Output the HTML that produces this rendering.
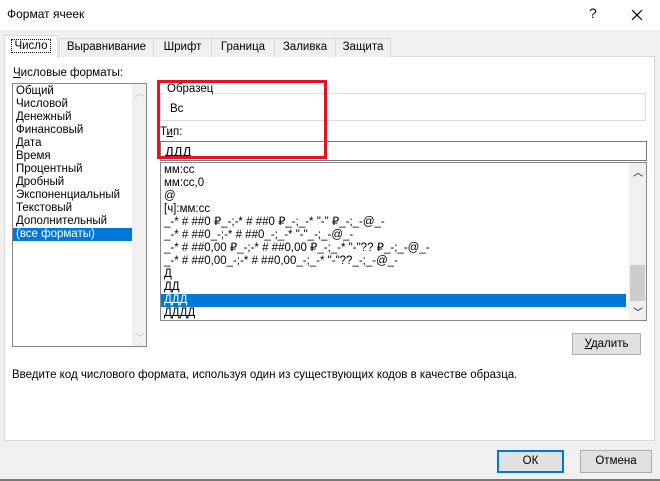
<!DOCTYPE html>
<html><head><meta charset="utf-8"><style>
*{margin:0;padding:0;box-sizing:border-box}
body{width:660px;height:481px;position:relative;background:#f0f0f0;font-family:"Liberation Sans",sans-serif;font-size:11.5px;color:#000;overflow:hidden}
.a{position:absolute}
.title{left:0;top:0;width:660px;height:30px;background:#fff}
.tab{top:38px;height:19px;border:1px solid #d9d9d9;border-bottom:none;background:#f0f0f0;text-align:center;line-height:17px}
.panel{left:4px;top:56px;width:651px;height:385px;background:#fff;border:1px solid #d9d9d9}
.list{border:1px solid #828790;background:#fff}
.li{height:13px;line-height:13px;white-space:nowrap;padding-left:3px}
.btn{background:#e1e1e1;border:1px solid #adadad;text-align:center}
</style></head><body>
<div class="a title"><span class="a" style="left:7px;top:7px;font-size:12px">Формат ячеек</span>
<span class="a" style="left:589px;top:5px;font-size:14px">?</span>
<svg class="a" style="left:631px;top:9px" width="12" height="12"><path d="M1 1L11 11M11 1L1 11" stroke="#000" stroke-width="1.2"/></svg></div>
<div class="a panel"></div>
<div class="a tab" style="left:59px;width:95px">Выравнивание</div>
<div class="a tab" style="left:153px;width:59px">Шрифт</div>
<div class="a tab" style="left:211px;width:64px">Граница</div>
<div class="a tab" style="left:274px;width:62px">Заливка</div>
<div class="a tab" style="left:335px;width:56px">Защита</div>
<div class="a tab" style="left:4px;top:35px;width:54px;height:23px;background:#fff;line-height:20px"><span style="outline:1px dotted #000;padding:0 2px">Число</span></div>
<div class="a" style="left:13px;top:67px"><u>Ч</u>исловые форматы:</div>
<div class="a list" style="left:12px;top:83px;width:135px;height:264px">
<div style="padding-top:1px">
<div class="li">Общий</div><div class="li">Числовой</div><div class="li">Денежный</div><div class="li">Финансовый</div><div class="li">Дата</div><div class="li">Время</div><div class="li">Процентный</div><div class="li">Дробный</div><div class="li">Экспоненциальный</div><div class="li">Текстовый</div><div class="li">Дополнительный</div><div class="li" style="background:#0078d7;color:#fff;width:119px">(все форматы)</div>
</div>
<div class="a" style="right:0;top:0;width:14px;height:262px;background:#f0f0f0"><span class="a" style="left:3px;top:2px;color:#bbb;font-size:9px">︿</span><span class="a" style="left:3px;bottom:2px;color:#bbb;font-size:9px">﹀</span></div>
</div>
<div class="a" style="left:160px;top:93px;width:486px;height:28px;border:1px solid #dcdcdc"></div>
<div class="a" style="left:165px;top:83px;background:#fff;padding:0 2px">Образец</div>
<div class="a" style="left:170px;top:103px">Вс</div>
<div class="a" style="left:160px;top:126px">Т<u>и</u>п:</div>
<div class="a" style="left:160px;top:141px;width:487px;height:20px;border:1px solid #7a7a7a;background:#fff;padding:2px 0 0 4px;font-size:13px">ДДД</div>
<div class="a list" style="left:160px;top:162px;width:487px;height:159px;overflow:hidden">
<div style="padding-top:1px">
<div class="li">мм:сс</div><div class="li">мм:сс,0</div><div class="li">@</div><div class="li">[ч]:мм:сс</div>
<div class="li">_-* # ##0 ₽_-;-* # ##0 ₽_-;_-* "-" ₽_-;_-@_-</div>
<div class="li">_-* # ##0_-;-* # ##0_-;_-* "-"_-;_-@_-</div>
<div class="li">_-* # ##0,00 ₽_-;-* # ##0,00 ₽_-;_-* "-"?? ₽_-;_-@_-</div>
<div class="li">_-* # ##0,00_-;-* # ##0,00_-;_-* "-"??_-;_-@_-</div>
<div class="li">Д</div><div class="li">ДД</div>
<div class="li" style="background:#0078d7;color:#fff;width:465px">ДДД</div>
<div class="li">ДДДД</div>
</div>
<div class="a" style="right:0;top:0;width:17px;height:157px;background:#f0f0f0">
<span class="a" style="left:4px;top:1px;font-size:10px">︿</span>
<div class="a" style="left:1px;top:102px;width:15px;height:36px;background:#cdcdcd"></div>
<span class="a" style="left:4px;bottom:1px;font-size:10px">﹀</span></div>
</div>
<div class="a" style="left:157px;top:80px;width:170px;height:79px;border:3px solid #e81123"></div>
<div class="a btn" style="left:572px;top:333px;width:69px;height:22px;line-height:20px"><u>У</u>далить</div>
<div class="a" style="left:12px;top:369px">Введите код числового формата, используя один из существующих кодов в качестве образца.</div>
<div class="a btn" style="left:497px;top:450px;width:67px;height:23px;line-height:19px;border:2px solid #0078d7">ОК</div>
<div class="a btn" style="left:580px;top:450px;width:72px;height:23px;line-height:21px">Отмена</div>
<div class="a" style="left:0;top:479px;width:660px;height:2px;background:#777"></div>
</body></html>
